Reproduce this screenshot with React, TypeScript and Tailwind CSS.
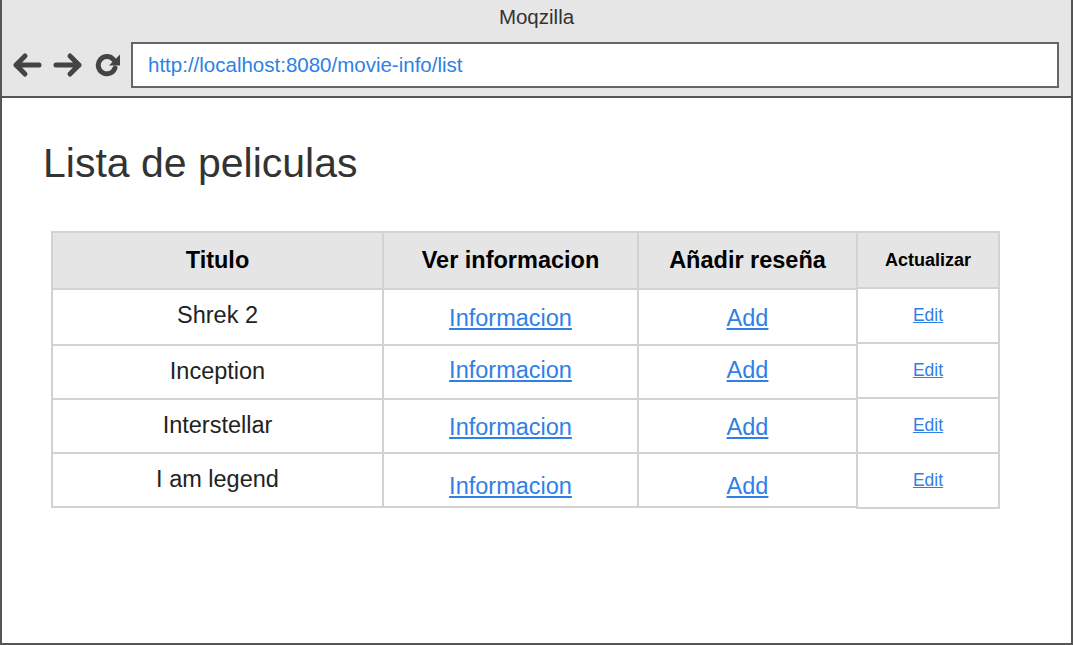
import React from 'react';

const movies = ['Shrek 2', 'Inception', 'Interstellar', 'I am legend'];
// the mockup's text baselines drift a little from row to row
const titlePad = ['pb-[2px]', 'pb-[0px]', 'pb-[0px]', 'pb-[0px]'];
const linkPad = ['pt-[4px]', 'pb-[2px]', 'pt-[4px]', 'pt-[14px]'];

const ArrowIcon: React.FC<{ dir: 'left' | 'right' }> = ({ dir }) => (
  <svg width="30" height="26" viewBox="0 0 30 26" fill="none" stroke="#444" strokeWidth="5" strokeLinecap="round" strokeLinejoin="round">
    {dir === 'left' ? <path d="M27 13H4M13 4L4 13L13 22" /> : <path d="M3 13H26M17 4L26 13L17 22" />}
  </svg>
);

const ReloadIcon: React.FC = () => (
  <svg width="27" height="24" viewBox="0 0 27 24" fill="none">
    <path d="M19.6 6.8A8.6 8.6 0 1 0 21 15" stroke="#444" strokeWidth="5" strokeLinecap="round" />
    <path d="M26 1.5V12.5H15Z" fill="#444" />
  </svg>
);

const App: React.FC = () => {
  return (
    <div className="w-[1074px] h-[645px] bg-white font-['Liberation_Sans',Arial,sans-serif]">
      <div className="w-[1073px] h-[645px] border-l-2 border-r-2 border-b-2 border-[#555] flex flex-col">
        {/* Title bar + address bar */}
        <div className="h-[98px] bg-[#e6e6e6] border-b-2 border-[#555] flex flex-col">
          <div className="h-[40px] pt-[2px] text-center text-[20.5px] text-[#333]">Moqzilla</div>
          <div className="flex items-center h-[50px] pl-[10px]">
            <div className="flex items-center gap-[11px]">
              <ArrowIcon dir="left" />
              <ArrowIcon dir="right" />
              <ReloadIcon />
            </div>
            <div className="ml-[10px] w-[928px] h-[46px] bg-white border-2 border-[#666] flex items-center pl-[15px] text-[20.5px] text-[#2f7fe6]">
              http://localhost:8080/movie-info/list
            </div>
          </div>
        </div>

        {/* Page content */}
        <div className="flex-1 pl-[41px] pt-[42px]">
          <h1 className="text-[41px] leading-[46px] text-[#333]">Lista de peliculas</h1>

          <div className="mt-[45px] ml-[8px] flex items-start">
            <table className="border-collapse text-center">
              <thead>
                <tr className="h-[57px] bg-[#e5e5e5]">
                  <th className="w-[331px] border-2 border-[#d2d2d2] text-[23.5px] font-bold text-black">Titulo</th>
                  <th className="w-[255px] border-2 border-[#d2d2d2] text-[23.5px] font-bold text-black">Ver informacion</th>
                  <th className="w-[219px] border-2 border-[#d2d2d2] text-[23.5px] font-bold text-black">Añadir reseña</th>
                </tr>
              </thead>
              <tbody>
                {movies.map((m, i) => (
                  <tr key={m} className={i === 0 ? 'h-[56px]' : 'h-[54px]'}>
                    <td className={`border-2 border-[#d2d2d2] text-[23.5px] text-[#222] ${titlePad[i]}`}>{m}</td>
                    <td className={`border-2 border-[#d2d2d2] ${linkPad[i]}`}>
                      <a href="#" className="text-[23.5px] text-[#2f7fe6] underline">Informacion</a>
                    </td>
                    <td className={`border-2 border-[#d2d2d2] ${linkPad[i]}`}>
                      <a href="#" className="text-[23.5px] text-[#2f7fe6] underline">Add</a>
                    </td>
                  </tr>
                ))}
              </tbody>
            </table>

            <table className="border-collapse text-center -ml-[2px]">
              <thead>
                <tr className="h-[56px] bg-[#e5e5e5]">
                  <th className="w-[142px] border-2 border-[#d2d2d2] text-[18px] font-bold text-black">Actualizar</th>
                </tr>
              </thead>
              <tbody>
                {movies.map((m) => (
                  <tr key={m} className="h-[55px]">
                    <td className="border-2 border-[#d2d2d2] pb-[0px]">
                      <a href="#" className="text-[17.5px] text-[#2f7fe6] underline">Edit</a>
                    </td>
                  </tr>
                ))}
              </tbody>
            </table>
          </div>
        </div>
      </div>
    </div>
  );
};

export default App;
